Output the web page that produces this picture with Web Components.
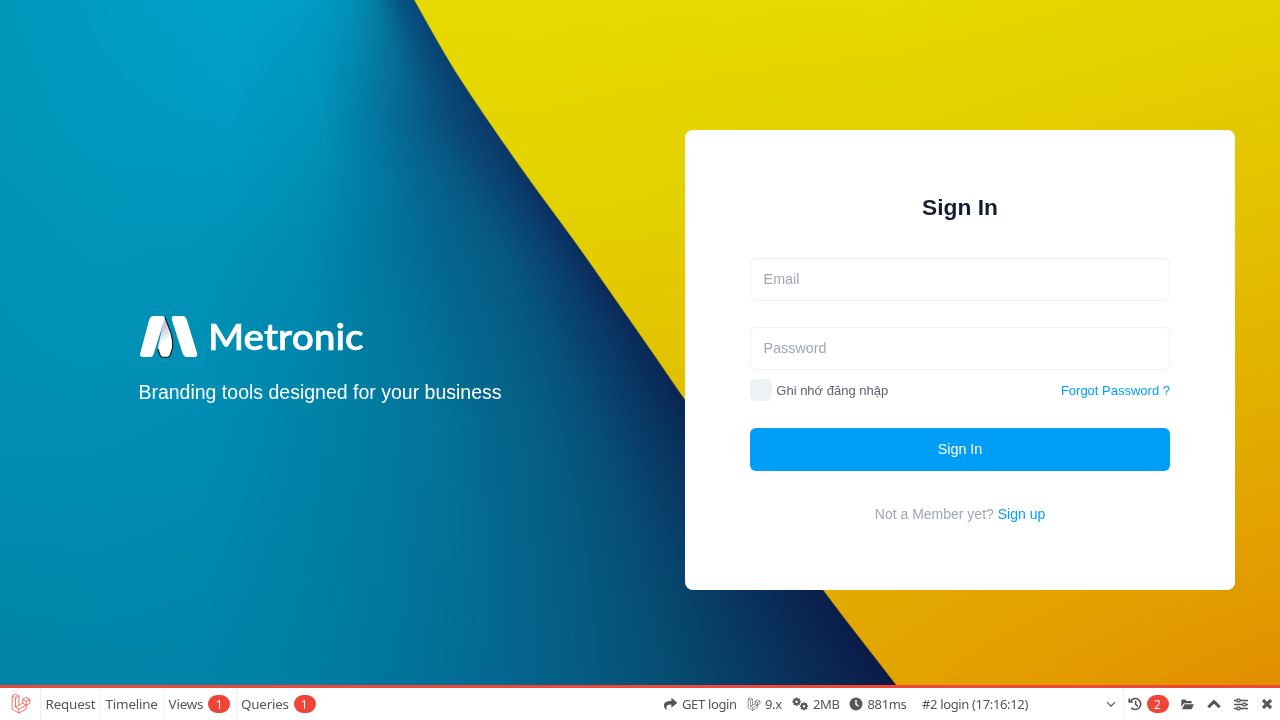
<!DOCTYPE html>
<html lang="en">
<head>
<meta charset="utf-8">
<title>Metronic - Sign In</title>
<style>
html,body{margin:0;height:100%;overflow:hidden}
body{font-family:"Liberation Sans",Arial,sans-serif;font-size:13px}
</style>
</head>
<body>
<app-shell>
  <brand-aside>Branding tools designed for your business</brand-aside>
  <login-card></login-card>
  <debug-bar slot="footer"></debug-bar>
</app-shell>
<script>
function define(name, html, setup) {
  customElements.define(name, class extends HTMLElement {
    constructor() {
      super();
      this.attachShadow({mode: "open"}).innerHTML = html;
    }
    connectedCallback() { if (setup) setup(this, this.shadowRoot); }
  });
}

/* Two folded paper sheets: each row is blended from a table of colour stops */
const BLUE = [
  [0,   [0,0x0097ba],[90,0x009bc0],[240,0x00a1c8],[320,0x009bc2],[350,0x0290b6],[372,0x047fa4],[395,0x065a88],[415,0x084478]],
  [120, [0,0x0095b8],[90,0x0099bd],[230,0x009bc2],[320,0x0092b8],[365,0x027ba6],[410,0x06628d],[450,0x0a4a78],[488,0x0a3968]],
  [250, [0,0x0091b5],[90,0x0094b8],[200,0x0093b8],[300,0x008bb0],[370,0x007aa2],[440,0x046690],[500,0x075980],[550,0x0a3f70],[580,0x0a2c5c]],
  [420, [0,0x008fb2],[90,0x008fb2],[200,0x008db3],[300,0x0083a9],[433,0x03749a],[480,0x04698f],[533,0x065f85],[590,0x074f78],[640,0x083a66],[700,0x0a2450]],
  [685, [0,0x0083a6],[90,0x0084a8],[200,0x0083a8],[300,0x007ea3],[400,0x00749a],[500,0x046790],[600,0x06587f],[685,0x064a6e],[760,0x083860],[850,0x0a2450],[896,0x0a1a46]]
];
const GOLD = [
  [0,   [414,0xe6da00],[900,0xe5d900],[1280,0xe4d200]],
  [200, [545,0xe3d200],[900,0xe3cc00],[1280,0xe3c200]],
  [400, [685,0xe2c000],[1000,0xe2b800],[1280,0xe2ae00]],
  [600, [830,0xe2aa00],[1050,0xe2a200],[1280,0xe29900]],
  [685, [896,0xe2a300],[1050,0xe39b00],[1280,0xe18e00]]
];
const EDGE = [[0,414],[46,440],[75,457.5],[123,489.5],[180,529.5],[245,577],[302,617],[358,656],[400,685],[590,823],[685,896]];
const rgb = c => [c >> 16, c >> 8 & 255, c & 255];
function sample(stops, x) {
  if (x <= stops[0][0]) return rgb(stops[0][1]);
  for (let i = 1; i < stops.length; i++) if (x <= stops[i][0]) {
    const a = stops[i-1], b = stops[i], t = (x-a[0])/(b[0]-a[0]), p = rgb(a[1]), q = rgb(b[1]);
    return p.map((v, k) => v + (q[k]-v)*t);
  }
  return rgb(stops[stops.length-1][1]);
}
/* cubic Hermite curve through the fold points */
const slope = i => { const a = EDGE[Math.max(0, i-1)], b = EDGE[Math.min(EDGE.length-1, i+1)]; return (b[1]-a[1])/(b[0]-a[0]); };
function edgeAt(y) {
  for (let i = 1; i < EDGE.length; i++) if (y <= EDGE[i][0]) {
    const a = EDGE[i-1], b = EDGE[i], h = b[0]-a[0], t = (y-a[0])/h, t2 = t*t, t3 = t2*t;
    return (2*t3-3*t2+1)*a[1] + (t3-2*t2+t)*h*slope(i-1) + (3*t2-2*t3)*b[1] + (t3-t2)*h*slope(i);
  }
  return 896;
}
function pick(table, x, y, e, shift) {
  let i = 1;
  while (i < table.length-1 && y > table[i][0]) i++;
  const a = table[i-1], b = table[i], t = (y-a[0])/(b[0]-a[0]);
  /* keep the shadow parallel to the fold between two tabulated rows */
  const at = r => { const k = shift ? Math.max(0, Math.min(1, (x-300)/(e-300))) : 0;
    return sample(r.slice(1), x + (edgeAt(r[0])-e)*k); };
  const p = at(a), q = at(b);
  return p.map((v, k) => v + (q[k]-v)*t);
}
define("app-shell", `<style>
:host{display:grid;grid-template:1fr/1fr;width:100%;height:100vh}
canvas,.page{grid-area:1/1}
canvas{width:1280px;height:685px;display:block}
.page{display:flex;flex-direction:column;min-width:0;height:100vh;z-index:1}
.main{flex:1;display:grid;grid-template-columns:685px 550px;align-items:start}
</style><canvas width="1280" height="685"></canvas>
<div class="page"><div class="main"><slot></slot></div><slot name="footer"></slot></div>`, (el, root) => {
  const ctx = root.querySelector("canvas").getContext("2d"), img = ctx.createImageData(1280, 685);
  for (let y = 0; y < 685; y++) {
    const e = edgeAt(y);
    for (let x = 0; x < 1280; x++) {
      const m = Math.max(0, Math.min(1, (x-e)/1.6+.5));
      const b = m < 1 ? pick(BLUE, x, y, e, true) : null, g = m > 0 ? pick(GOLD, x, y, e, false) : null;
      const i = (y*1280+x)*4;
      for (let k = 0; k < 3; k++) img.data[i+k] = (b ? b[k]*(1-m) : 0) + (g ? g[k]*m : 0);
      img.data[i+3] = 255;
    }
  }
  ctx.putImageData(img, 0, 0);
});

define("brand-aside", `<style>
:host{display:block;padding:314px 0 0 138.400px;color:#fff;font-size:19.5px;line-height:29px}
svg{display:block;margin:0 0 18px -.4px}
text{font:600 37px Lato,sans-serif;fill:#fff;stroke:#fff;stroke-width:.5}
</style><svg width="228" height="46" viewBox="138 314 228 46">
<defs><linearGradient id="g" gradientUnits="userSpaceOnUse" x1="160" y1="330" x2="171" y2="345"><stop offset="0" stop-color="#c9c9de"/><stop offset=".7" stop-color="#fff"/></linearGradient></defs>
<path d="M164.500 317L171 333Q173 340 172.800 347L170.300 355Q169.500 357.300 167 357.300H163Q160.800 357.300 160 355L157.800 348Z" fill="url(#g)"/>
<path d="M165 317.500L171 333Q173 340 172.800 347L170.300 355Q169.500 357.300 167 357.300H163Q160.800 357.300 160 355L158 349" fill="none" stroke="#111" stroke-width="1.100"/>
<path d="M153.500 316H162Q165.300 316 164.400 319.500L153.500 354.500Q152.500 357 150 357H143Q139 357 140.300 353L149.300 319.500Q150.300 316 153.500 316Z" fill="#fff"/>
<path d="M174 316H182.500Q185.500 316 186.700 319.500L197 353Q198 357 194.500 357H187Q184 357 182.800 354L172 320Q171 316 174 316Z" fill="#fff"/>
<text x="208" y="350" textLength="155.500" lengthAdjust="spacingAndGlyphs">Metronic</text></svg><slot></slot>`);

define("text-field", `<style>
:host{display:flex;align-items:center;box-sizing:border-box;height:43px;border:1px solid #eff2f5;border-radius:6px;padding:0 12.600px 2px;font-size:14.3px;color:#a1a5b7;background:#fff}
</style><slot></slot>`);
define("primary-button", `<style>
:host{display:flex;align-items:center;justify-content:center;height:43px;border-radius:6px;background:#009ef7;color:#fff;font-size:14.3px}
</style><slot></slot>`);
define("login-card", `<style>
:host{display:flex;flex-direction:column;box-sizing:border-box;width:550px;height:460.500px;margin-top:129.500px;padding:63px 65px 0;background:#fff;border-radius:8px}
h1{margin:0 0 37.700px;font-size:22.75px;line-height:28px;text-align:center;color:#181c32}
.gap{margin-top:26px}
.row{display:flex;align-items:center;height:22px;margin:9.300px 0 26.500px;color:#5e6278}
.box{width:22px;height:22px;border-radius:5.500px;background:#eff2f5;margin-right:4.300px}
.link{color:#009ef7}
.row .link{margin-left:auto}
.foot{margin-top:33px;line-height:20px;text-align:center;font-size:14px;color:#a1a5b7}
</style><h1>Sign In</h1><text-field>Email</text-field><text-field class="gap">Password</text-field>
<div class="row"><span class="box"></span><span>Ghi nhớ đăng nhập</span><span class="link">Forgot Password ?</span></div>
<primary-button>Sign In</primary-button>
<div class="foot">Not a Member yet? <span class="link">Sign up</span></div>`);

const LARAVEL = `<path d="M1 3.500L5 1.200L9 3.500V14.500L13.500 12V7.500L17.500 5.200L22 7.500V12.200L17.700 14.700V19L9 24L1 19.200ZM1 3.500L5 5.800L9 3.500M5 5.800V16.800L9 19.200L17.700 14.200M5 16.800L9 14.500M9 19.200V24M13.500 7.500L17.700 9.800L22 7.500M17.700 9.800V14.700L13.500 12"/>`;
const GEAR = (x, y, r) => `<g transform="translate(${x} ${y})"><circle r="${r*.56}" fill="none" stroke="currentColor" stroke-width="${r*.5}"/><path d="${[0,45,90,135].map(a => { const c = Math.cos(a*Math.PI/180), s = Math.sin(a*Math.PI/180); return `M${c*r} ${s*r}L${c*r*.6} ${s*r*.6}M${-c*r} ${-s*r}L${-c*r*.6} ${-s*r*.6}`; }).join("")}" stroke="currentColor" stroke-width="${r*.4}"/></g>`;
const ICONS = {
  logo: [22, 21, "0 0 23 25", `<g fill="none" stroke="#f4433a" stroke-width=".9" stroke-linejoin="round">${LARAVEL}</g>`],
  laravel: [14, 14, "0 0 23 25", `<g fill="none" stroke="currentColor" stroke-width="1.100" stroke-linejoin="round">${LARAVEL}</g>`],
  share: [13, 14, "0 0 512 512", `<path fill="currentColor" d="M503.700 189.800L327.700 37.900C312.300 24.500 288 35.300 288 56v80C127.400 137.900 0 170.100 0 322.300c0 61.400 39.600 122.300 83.300 154.200 13.700 9.900 33.100-2.500 28.100-18.600C66.100 312.800 132.900 274.300 288 272.100V360c0 20.700 24.300 31.500 39.700 18.200l176-152c11.100-9.600 11.100-26.800 0-36.400z"/>`],
  gears: [17, 14, "0 0 17 14", GEAR(4.600,4.700,4.200) + GEAR(12,9.300,4)],
  clock: [14, 14, "0 0 14 14", `<circle cx="7" cy="7" r="6.500" fill="currentColor"/><path d="M7 2.800V7.300L9.600 9.200" fill="none" stroke="#fff" stroke-width="1.400"/>`],
  chevron: [10, 7, "0 0 10 7", `<path d="M1 1.200L5 5.200L9 1.200" fill="none" stroke="currentColor" stroke-width="1.200"/>`],
  history: [15, 14, "0 0 15 14", `<path d="M2.600 4A5.500 5.500 0 1 1 3.200 10.800M1.200 1.500V5H4.800M7.600 3.800V7.200L9.800 9.400" fill="none" stroke="currentColor" stroke-width="1.600"/>`],
  folder: [13, 11, "0 0 13 11", `<path fill="currentColor" d="M.3 8.500V1.600Q.3.600 1.300.6H4.300L5.500 1.900H9.700Q10.700 1.900 10.700 2.900V4.300H3.500Q2.700 4.300 2.300 5ZM3.500 5.200H12.900L10.900 9.600Q10.600 10.300 9.700 10.300H.9Z"/>`],
  up: [14, 10, "0 0 14 10", `<path d="M1.300 8.300L7 2.700L12.700 8.300" fill="none" stroke="currentColor" stroke-width="3"/>`],
  sliders: [14, 13, "0 0 14 13", `<path d="M0 2.500H14M0 6.500H14M0 10.500H14" stroke="currentColor" stroke-width="1.400"/><g fill="#fff" stroke="currentColor" stroke-width="1.300"><rect x="3" y="1.100" width="3" height="2.800" rx=".8"/><rect x="8.800" y="5.100" width="3" height="2.800" rx=".8"/><rect x="3" y="9.100" width="3" height="2.800" rx=".8"/></g>`],
  close: [10, 10, "0 0 10 10", `<path d="M1 1L9 9M9 1L1 9" stroke="currentColor" stroke-width="3.100"/>`]
};
define("bar-icon", `<style>:host{display:block;flex:none}svg{display:block}</style><span></span>`, (el, root) => {
  const [w, h, vb, body] = ICONS[el.getAttribute("name")];
  root.querySelector("span").innerHTML = `<svg width="${w}" height="${h}" viewBox="${vb}">${body}</svg>`;
});
define("count-badge", `<style>
:host{display:flex;align-items:center;justify-content:center;flex:none;box-sizing:border-box;width:22px;height:18px;padding:1px 1px 0 0;border-radius:9px;background:#ef4436;color:#fff;font-size:12px;line-height:17px}
</style><slot></slot>`);
define("debug-bar", `<style>
:host{display:flex;box-sizing:border-box;flex:none;height:35px;border-top:3px solid #f04838;background:#fff;color:#555;font:13.400px/32px "Noto Sans","Open Sans",sans-serif;white-space:nowrap}
div{display:flex;align-items:center;box-sizing:border-box;height:32px;flex:none}
.tab{border-right:1px solid #eee;padding-left:4.600px}
.t{letter-spacing:-.2px}
.c{width:39.900px}
.m{font-size:13px;letter-spacing:-.35px}
</style>
<div class="tab" style="width:41px;padding:0 0 1px 10px"><bar-icon name="logo"></bar-icon></div>
<div class="tab t" style="width:60px">Request</div>
<div class="tab t" style="width:63px">Timeline</div>
<div class="tab t" style="width:73px"><span class="c">Views</span><count-badge>1</count-badge></div>
<div class="t" style="width:427px;padding-left:4px"><span style="width:52.500px">Queries</span><count-badge>1</count-badge></div>
<div class="m" style="width:83px;gap:5px"><bar-icon name="share"></bar-icon>GET login</div>
<div class="m" style="width:45px;gap:4px"><bar-icon name="laravel"></bar-icon>9.x</div>
<div class="m" style="width:57px;gap:4px"><bar-icon name="gears"></bar-icon>2MB</div>
<div class="m" style="width:73px;gap:4.500px"><bar-icon name="clock"></bar-icon>881ms</div>
<div class="m" style="width:184px">#2 login (17:16:12)</div>
<div class="tab" style="width:18px;padding:0"><bar-icon name="chevron"></bar-icon></div>
<div style="width:57px;padding-left:4px;gap:4px"><bar-icon name="history"></bar-icon><count-badge>2</count-badge></div>
<div style="width:26px"><bar-icon name="folder"></bar-icon></div>
<div style="width:27px"><bar-icon name="up"></bar-icon></div>
<div style="width:28px"><bar-icon name="sliders"></bar-icon></div>
<div><bar-icon name="close"></bar-icon></div>`);
</script>
</body>
</html>
